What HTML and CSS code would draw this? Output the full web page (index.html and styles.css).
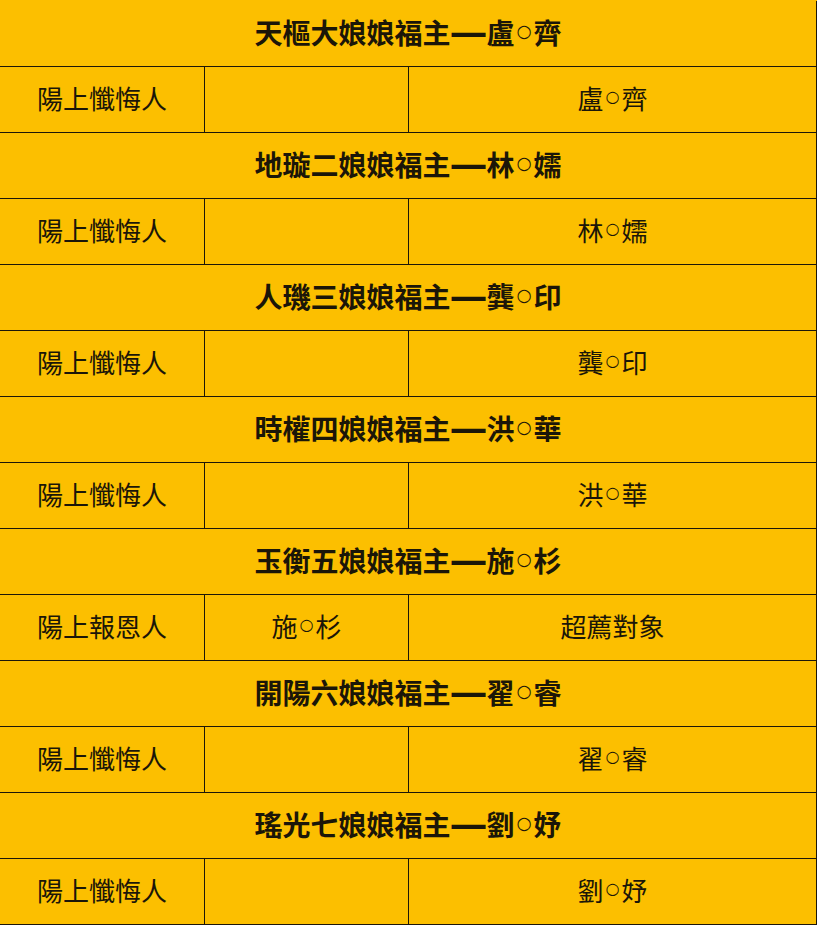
FILE: index.html
```html
<!DOCTYPE html>
<html lang="zh-Hant">
<head>
<meta charset="utf-8">
<title>福主</title>
<link rel="stylesheet" href="styles.css">
</head>
<body>
<div class="sheet">
  <div class="row head"><div class="cell">天樞大娘娘福主<span class="dash">—</span>盧<span class="o">○</span>齊</div></div>
  <div class="row"><div class="cell c1">陽上懺悔人</div><div class="cell c2"></div><div class="cell c3">盧<span class="o">○</span>齊</div></div>
  <div class="row head"><div class="cell">地璇二娘娘福主<span class="dash">—</span>林<span class="o">○</span>嬬</div></div>
  <div class="row"><div class="cell c1">陽上懺悔人</div><div class="cell c2"></div><div class="cell c3">林<span class="o">○</span>嬬</div></div>
  <div class="row head"><div class="cell">人璣三娘娘福主<span class="dash">—</span>龔<span class="o">○</span>印</div></div>
  <div class="row"><div class="cell c1">陽上懺悔人</div><div class="cell c2"></div><div class="cell c3">龔<span class="o">○</span>印</div></div>
  <div class="row head"><div class="cell">時權四娘娘福主<span class="dash">—</span>洪<span class="o">○</span>華</div></div>
  <div class="row"><div class="cell c1">陽上懺悔人</div><div class="cell c2"></div><div class="cell c3">洪<span class="o">○</span>華</div></div>
  <div class="row head"><div class="cell">玉衡五娘娘福主<span class="dash">—</span>施<span class="o">○</span>杉</div></div>
  <div class="row"><div class="cell c1">陽上報恩人</div><div class="cell c2">施<span class="o">○</span>杉</div><div class="cell c3">超薦對象</div></div>
  <div class="row head"><div class="cell">開陽六娘娘福主<span class="dash">—</span>翟<span class="o">○</span>睿</div></div>
  <div class="row"><div class="cell c1">陽上懺悔人</div><div class="cell c2"></div><div class="cell c3">翟<span class="o">○</span>睿</div></div>
  <div class="row head"><div class="cell">瑤光七娘娘福主<span class="dash">—</span>劉<span class="o">○</span>妤</div></div>
  <div class="row"><div class="cell c1">陽上懺悔人</div><div class="cell c2"></div><div class="cell c3">劉<span class="o">○</span>妤</div></div>
</div>
</body>
</html>
```
FILE: styles.css
```css
html, body {
  margin: 0;
  padding: 0;
  background: #fcbf00;
}
body {
  font-family: "Noto Sans CJK TC", "Noto Sans CJK SC", sans-serif;
  color: #1b1608;
}
.sheet {
  width: 817px;
  padding-top: 1px;
  background: #fcbf00;
}
.row {
  display: grid;
  grid-template-columns: 205px 204px 408px;
  height: 66px;
  box-sizing: border-box;
  border-bottom: 1px solid #1c1608;
}
.row.head {
  grid-template-columns: 817px;
}
.cell {
  display: flex;
  align-items: center;
  justify-content: center;
  border-right: 1px solid #1c1608;
  font-size: 26px;
  line-height: 1;
  white-space: nowrap;
  padding-bottom: 4px;
  box-sizing: border-box;
}
.row.head .cell {
  font-size: 28px;
  font-weight: 700;
}
.dash {
  font-family: "Liberation Sans", sans-serif;
  font-weight: 700;
  font-size: 34px;
  line-height: 28px;
  display: inline-block;
  transform: scaleY(1.25);
  position: relative;
  top: -1px;
  margin: 0 1px;
}
.o {
  font-family: "DejaVu Sans", sans-serif;
  font-size: 0.62em;
  font-weight: 400;
  margin: 0 2px;
}
```
